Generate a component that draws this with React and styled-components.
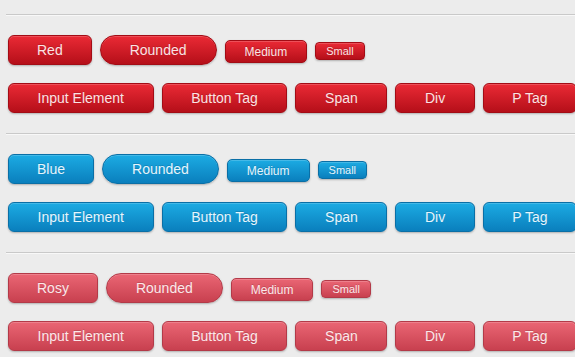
import React from 'react';
import styled, { createGlobalStyle, css } from 'styled-components';

const palettes = {
  red: {
    top: '#ea2a35',
    bottom: '#b50f19',
    border: '#a30c15',
    text: '#fbe3e4',
  },
  blue: {
    top: '#1cabe3',
    bottom: '#0a7fbd',
    border: '#0a6fa6',
    text: '#e6f5fc',
  },
  rosy: {
    top: '#ea6674',
    bottom: '#c8404f',
    border: '#b33a48',
    text: '#fbe8ea',
  },
};

const sections = [
  { name: 'Red', palette: 'red' },
  { name: 'Blue', palette: 'blue' },
  { name: 'Rosy', palette: 'rosy' },
];

const tags = ['Input Element', 'Button Tag', 'Span', 'Div', 'P Tag'];

const App = () => {
  return (
    <>
      <GlobalStyle />
      <Page>
        {sections.map((section) => (
          <Section key={section.name}>
            <Divider />
            <ButtonRow>
              <Button $palette={section.palette}>{section.name}</Button>
              <Button $palette={section.palette} $pill>
                Rounded
              </Button>
              <Button $palette={section.palette} $size="medium">
                Medium
              </Button>
              <Button $palette={section.palette} $size="small">
                Small
              </Button>
            </ButtonRow>
            <ButtonRow>
              {tags.map((tag) => (
                <Button key={tag} $palette={section.palette} $wide>
                  {tag}
                </Button>
              ))}
            </ButtonRow>
          </Section>
        ))}
      </Page>
    </>
  );
};

const GlobalStyle = createGlobalStyle`
  html, body {
    margin: 0;
    padding: 0;
    background: #ececec;
  }
  body {
    font-family: "Liberation Sans", Arial, sans-serif;
    overflow: hidden;
  }
`;

const Page = styled.div`
  width: 575px;
  height: 357px;
  padding-top: 14px;
  box-sizing: border-box;
  overflow: hidden;
`;

const Section = styled.section`
  display: flex;
  flex-direction: column;
  gap: 18px;
  padding-bottom: 20px;
`;

const Divider = styled.hr`
  margin: 0 0 1px 6px;
  height: 0;
  border: none;
  border-top: 1px solid #c9c9c9;
  border-bottom: 1px solid #f8f8f8;
`;

const ButtonRow = styled.div`
  display: flex;
  align-items: center;
  gap: 8px;
  height: 30px;
  padding-left: 8px;
  flex-wrap: nowrap;
  white-space: nowrap;
`;

const sizes = {
  large: css`
    height: 30px;
    padding: 0 28px;
    font-size: 14px;
    border-radius: 6px;
  `,
  medium: css`
    height: 23px;
    padding: 0 19px;
    font-size: 12px;
    border-radius: 5px;
    margin-top: 3px;
  `,
  small: css`
    height: 18px;
    padding: 0 10px;
    font-size: 11px;
    border-radius: 4px;
    margin-top: 1px;
  `,
};

const Button = styled.button`
  flex: none;
  display: inline-flex;
  align-items: center;
  justify-content: center;
  box-sizing: border-box;
  font-family: "Liberation Sans", Arial, sans-serif;
  ${(props) => sizes[props.$size || 'large']}
  border: 1px solid ${(props) => palettes[props.$palette].border};
  color: ${(props) => palettes[props.$palette].text};
  background: linear-gradient(
    to bottom,
    ${(props) => palettes[props.$palette].top},
    ${(props) => palettes[props.$palette].bottom}
  );
  box-shadow: inset 0 1px 0 rgba(255, 255, 255, 0.18), 0 1px 2px rgba(0, 0, 0, 0.25);
  text-shadow: 0 -1px 0 rgba(0, 0, 0, 0.15);
  cursor: pointer;
  ${(props) =>
    props.$wide &&
    css`
      padding: 0 28.6px;
    `}
  ${(props) =>
    props.$pill &&
    css`
      border-radius: 15px;
      padding: 0 29px;
    `}
`;

export default App;
